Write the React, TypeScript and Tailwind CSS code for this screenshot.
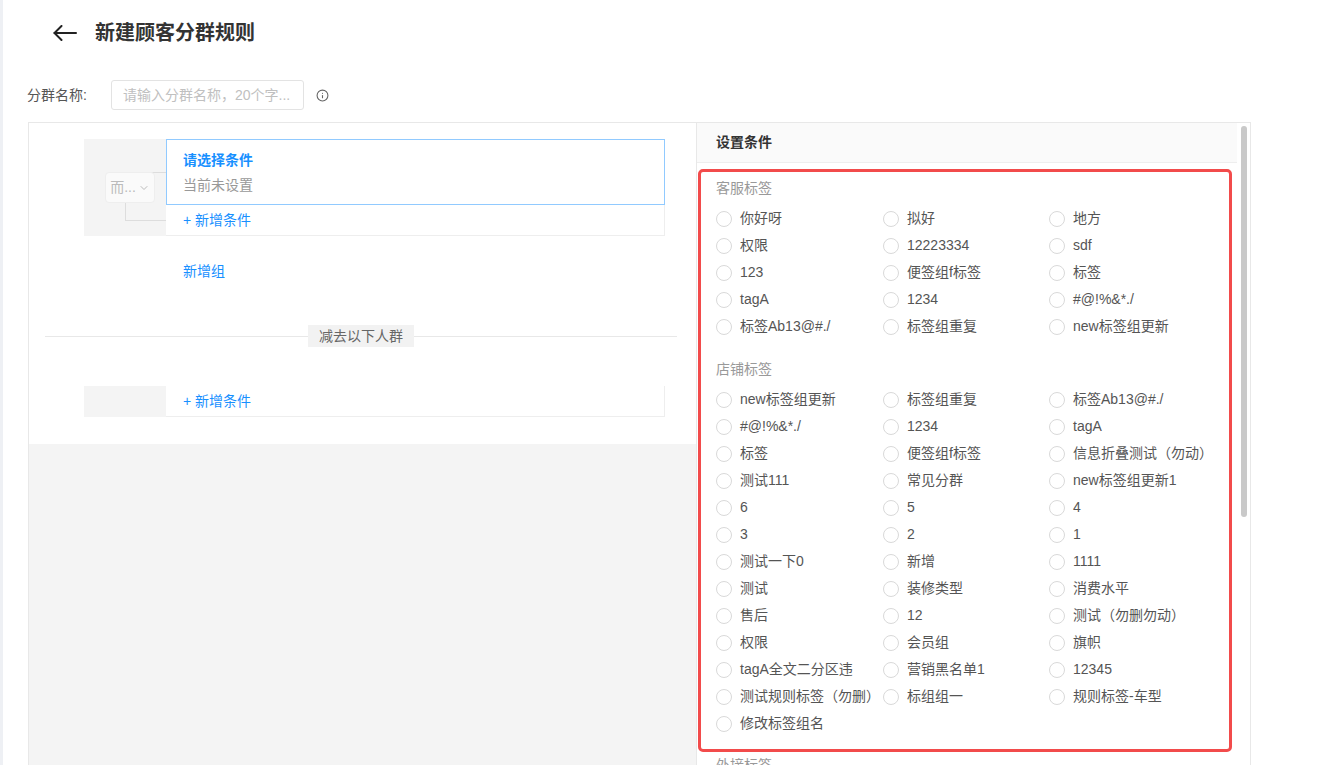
import { ChevronDown, Info } from "lucide-react";

const serviceTags = [
  "你好呀", "拟好", "地方",
  "权限", "12223334", "sdf",
  "123", "便签组f标签", "标签",
  "tagA", "1234", "#@!%&*./",
  "标签Ab13@#./", "标签组重复", "new标签组更新",
];

const shopTags = [
  "new标签组更新", "标签组重复", "标签Ab13@#./",
  "#@!%&*./", "1234", "tagA",
  "标签", "便签组f标签", "信息折叠测试（勿动）",
  "测试111", "常见分群", "new标签组更新1",
  "6", "5", "4",
  "3", "2", "1",
  "测试一下0", "新增", "1111",
  "测试", "装修类型", "消费水平",
  "售后", "12", "测试（勿删勿动）",
  "权限", "会员组", "旗帜",
  "tagA全文二分区违", "营销黑名单1", "12345",
  "测试规则标签（勿删）", "标组组一", "规则标签-车型",
  "修改标签组名",
];

const TagSection = ({ title, tags }: { title: string; tags: string[] }) => (
  <div>
    <div className="h-5 leading-5 text-[#999]">{title}</div>
    <div className="mt-[7px] grid grid-cols-[167px_166px_167px]">
      {tags.map((tag, i) => (
        <label key={i} className="flex h-[27px] items-center">
          <span className="h-4 w-4 shrink-0 rounded-full border border-[#d9d9d9] bg-white" />
          <span className="ml-2 whitespace-nowrap text-[#555]">{tag}</span>
        </label>
      ))}
    </div>
  </div>
);

const AddRow = () => (
  <div className="flex h-[31px] w-[499px] items-center border-r border-b border-[#eeeeee] bg-white pl-[17px] text-[#1890ff]">
    + 新增条件
  </div>
);

export default function App() {
  return (
    <div className="flex h-[765px] overflow-hidden bg-white text-[14px] text-[#333] font-['Liberation_Sans','Noto_Sans_CJK_SC',sans-serif]">
      <div className="w-[3px] shrink-0 bg-[#eef0f4]" />

      <div className="flex min-w-0 flex-1 flex-col pl-[24px]">
        {/* header */}
        <div className="mt-[21px] flex h-6 shrink-0 items-center pl-[26px]">
          <svg width="24" height="16" viewBox="0 0 24 16" fill="none" stroke="#222" strokeWidth="2" strokeLinecap="round" strokeLinejoin="round">
            <path d="M23 8H1.5" />
            <path d="M8.5 1L1.5 8l7 7" />
          </svg>
          <h1 className="ml-[18px] text-[20px] font-bold leading-6 text-[#333]">新建顾客分群规则</h1>
        </div>

        {/* name row */}
        <div className="mt-[35px] flex h-[30px] shrink-0 items-center">
          <span className="w-[84px] text-[#555]">分群名称:</span>
          <div className="flex h-[30px] w-[193px] items-center rounded-[3px] border border-[#e3e3e3] pl-[11px] text-[#c0c0c0]">
            请输入分群名称，20个字...
          </div>
          <Info size={13} className="ml-[12px] text-[#666]" />
        </div>

        {/* main panel */}
        <div className="mt-[12px] ml-[1px] flex h-[820px] w-[1223px] shrink-0 border border-[#e8e8e8]">
          {/* left */}
          <div className="flex w-[667px] shrink-0 flex-col">
            <div className="shrink-0 bg-white pt-[16px] pb-[27px]">
              <div className="ml-[55px] flex w-[581px]">
                <div className="relative w-[82px] shrink-0 bg-[#f4f4f4]">
                  <div className="absolute left-[41px] top-[33px] h-[49px] w-[41px] border-t border-l border-b border-[#dddddd]" />
                  <div className="absolute left-[21px] top-[33px] flex h-[31px] w-[50px] items-center justify-center gap-[2px] rounded-[4px] border border-[#eeeeee] bg-[#fafafa] text-[#bbb]">
                    <span>而...</span>
                    <ChevronDown size={12} />
                  </div>
                </div>
                <div className="flex flex-col">
                  <div className="flex h-[66px] w-[499px] flex-col justify-center gap-[5px] border border-[#91caff] bg-white pl-[16px]">
                    <div className="font-bold leading-5 text-[#1890ff]">请选择条件</div>
                    <div className="leading-5 text-[#999]">当前未设置</div>
                  </div>
                  <AddRow />
                </div>
              </div>

              <div className="mt-[25px] ml-[154px] leading-5 text-[#1890ff]">新增组</div>

              <div className="mt-[44px] ml-[16px] flex w-[632px] items-center">
                <div className="h-px flex-1 bg-[#e8e8e8]" />
                <div className="flex h-[22px] items-center bg-[#f2f2f2] px-[11px] text-[#666]">减去以下人群</div>
                <div className="h-px flex-1 bg-[#e8e8e8]" />
              </div>

              <div className="mt-[39px] ml-[55px] flex w-[581px]">
                <div className="w-[82px] shrink-0 bg-[#f4f4f4]" />
                <AddRow />
              </div>
            </div>
            <div className="flex-1 bg-[#f4f4f4]" />
          </div>

          {/* right */}
          <div className="relative flex min-w-0 flex-1 flex-col overflow-hidden border-l border-[#e8e8e8]">
            <div className="mr-[13px] flex h-[40px] shrink-0 items-center border-b border-[#eeeeee] bg-[#fafafa] pl-[19px] font-bold text-[#333]">
              设置条件
            </div>
            <div className="absolute right-[3px] top-[3px] h-[391px] w-[6px] rounded-full bg-[#c9c9c9]" />

            <div className="mt-[6px] ml-px w-[534px] shrink-0 rounded-[5px] border-[3px] border-[#f24b4b] pt-[6px] pb-[12px] pl-[15px]">
              <TagSection title="客服标签" tags={serviceTags} />
              <div className="mt-[19px]">
                <TagSection title="店铺标签" tags={shopTags} />
              </div>
            </div>
            <div className="mt-[3px] ml-[19px] shrink-0 leading-5 text-[#999]">外接标签</div>
          </div>
        </div>
      </div>
    </div>
  );
}
